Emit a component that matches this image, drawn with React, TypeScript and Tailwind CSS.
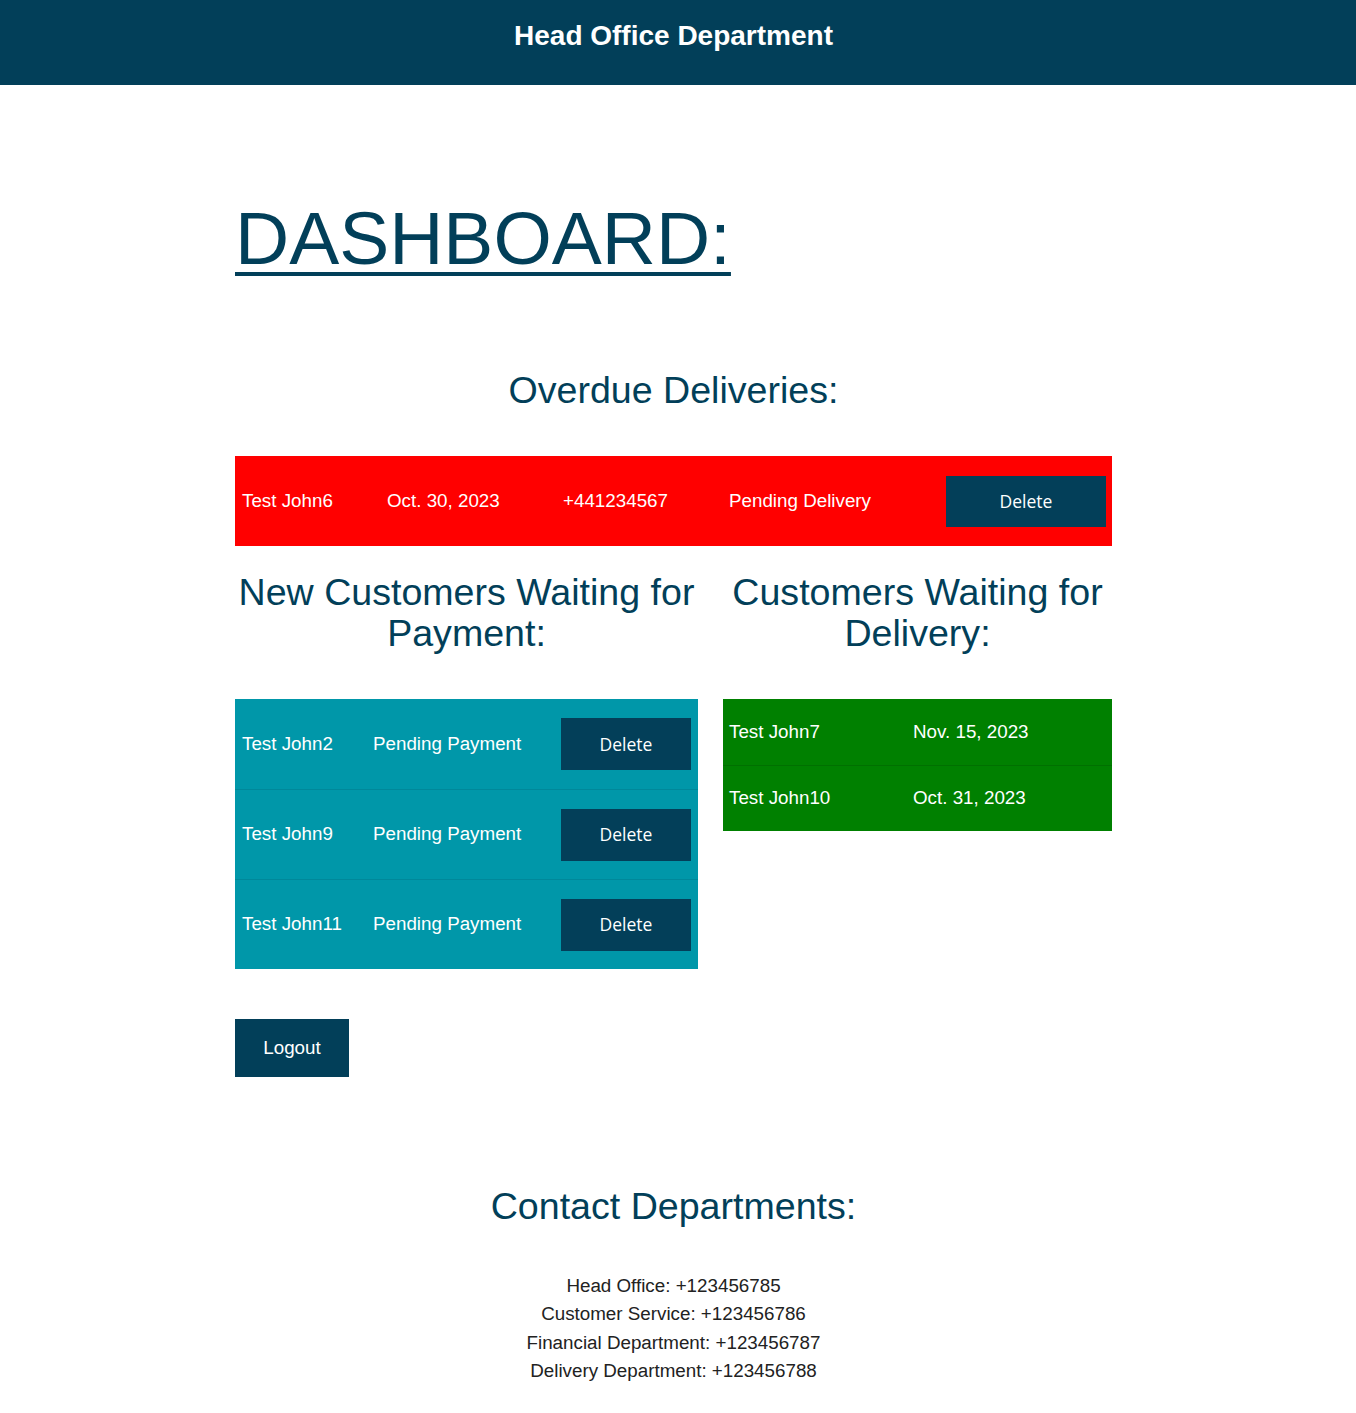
import React from 'react';

const overdue = [
  { name: 'Test John6', date: 'Oct. 30, 2023', phone: '+441234567', status: 'Pending Delivery' },
];

const waitingPayment = [
  { name: 'Test John2', status: 'Pending Payment' },
  { name: 'Test John9', status: 'Pending Payment' },
  { name: 'Test John11', status: 'Pending Payment' },
];

const waitingDelivery = [
  { name: 'Test John7', date: 'Nov. 15, 2023' },
  { name: 'Test John10', date: 'Oct. 31, 2023' },
];

const contacts = [
  'Head Office: +123456785',
  'Customer Service: +123456786',
  'Financial Department: +123456787',
  'Delivery Department: +123456788',
];

const DeleteButton = ({ wide }: { wide?: boolean }) => (
  <button
    className={`bg-[#033f59] text-white text-[17.5px] font-['Open_Sans',sans-serif] ${
      wide ? 'w-[160px] h-[51px]' : 'w-[130px] h-[52px]'
    }`}
  >
    Delete
  </button>
);

const App = () => {
  return (
    <div className="min-h-[1413px] bg-white font-['Liberation_Sans',Arial,sans-serif]">
      <header className="h-[85px] bg-[#023f59] pt-[20px]">
        <h1 className="w-[1347px] text-center text-[28px] leading-[32px] font-bold text-white">Head Office Department</h1>
      </header>

      <div className="w-[1347px]">
        <main className="w-[877px] mx-auto pb-[29px]">
          <h2 className="mt-[110px] text-[75px] leading-[86px] text-[#023f59] underline decoration-[4px] underline-offset-[8px] w-fit">
            DASHBOARD:
          </h2>

          <h3 className="mt-[88px] text-center text-[37.6px] leading-[42px] text-[#023f59]">Overdue Deliveries:</h3>

          <div className="mt-[45px] bg-[#ff0000] text-white text-[18.8px]">
            {overdue.map((row) => (
              <div key={row.name} className="grid grid-cols-[145px_176px_166px_217px_173px] items-center h-[90px]">
                <span className="pl-[7px]">{row.name}</span>
                <span className="pl-[7px]">{row.date}</span>
                <span className="pl-[7px]">{row.phone}</span>
                <span className="pl-[7px]">{row.status}</span>
                <span className="pl-[7px]">
                  <DeleteButton wide />
                </span>
              </div>
            ))}
          </div>

          <div className="mt-[26px] grid grid-cols-[463px_389px] gap-x-[25px] items-start">
            <div>
              <h3 className="text-center text-[37.6px] leading-[41px] text-[#023f59]">
                New Customers Waiting for Payment:
              </h3>
              <div className="mt-[45px] bg-[#0097a9] text-white text-[18.8px]">
                {waitingPayment.map((row, i) => (
                  <div
                    key={row.name}
                    className={`grid grid-cols-[131px_188px_144px] items-center h-[90px] ${
                      i > 0 ? 'border-t border-[#00889a]' : ''
                    }`}
                  >
                    <span className="pl-[7px]">{row.name}</span>
                    <span className="pl-[7px]">{row.status}</span>
                    <span className="pl-[7px]">
                      <DeleteButton />
                    </span>
                  </div>
                ))}
              </div>
            </div>

            <div>
              <h3 className="text-center text-[37.6px] leading-[41px] text-[#023f59]">
                Customers Waiting for Delivery:
              </h3>
              <div className="mt-[45px] bg-[#008000] text-white text-[18.8px]">
                {waitingDelivery.map((row, i) => (
                  <div
                    key={row.name}
                    className={`grid grid-cols-[183px_206px] items-center h-[66px] ${
                      i > 0 ? 'border-t border-[#007000]' : ''
                    }`}
                  >
                    <span className="pl-[6px]">{row.name}</span>
                    <span className="pl-[7px]">{row.date}</span>
                  </div>
                ))}
              </div>
            </div>
          </div>

          <button className="mt-[50px] w-[114px] h-[58px] bg-[#023f59] text-white text-[18.8px]">Logout</button>

          <h3 className="mt-[108px] text-center text-[37.6px] leading-[42px] text-[#023f59]">Contact Departments:</h3>

          <div className="mt-[45px] text-center text-[18.8px] leading-[28.4px] text-[#222222]">
            {contacts.map((c) => (
              <p key={c}>{c}</p>
            ))}
          </div>
        </main>
      </div>
    </div>
  );
};

export default App;
